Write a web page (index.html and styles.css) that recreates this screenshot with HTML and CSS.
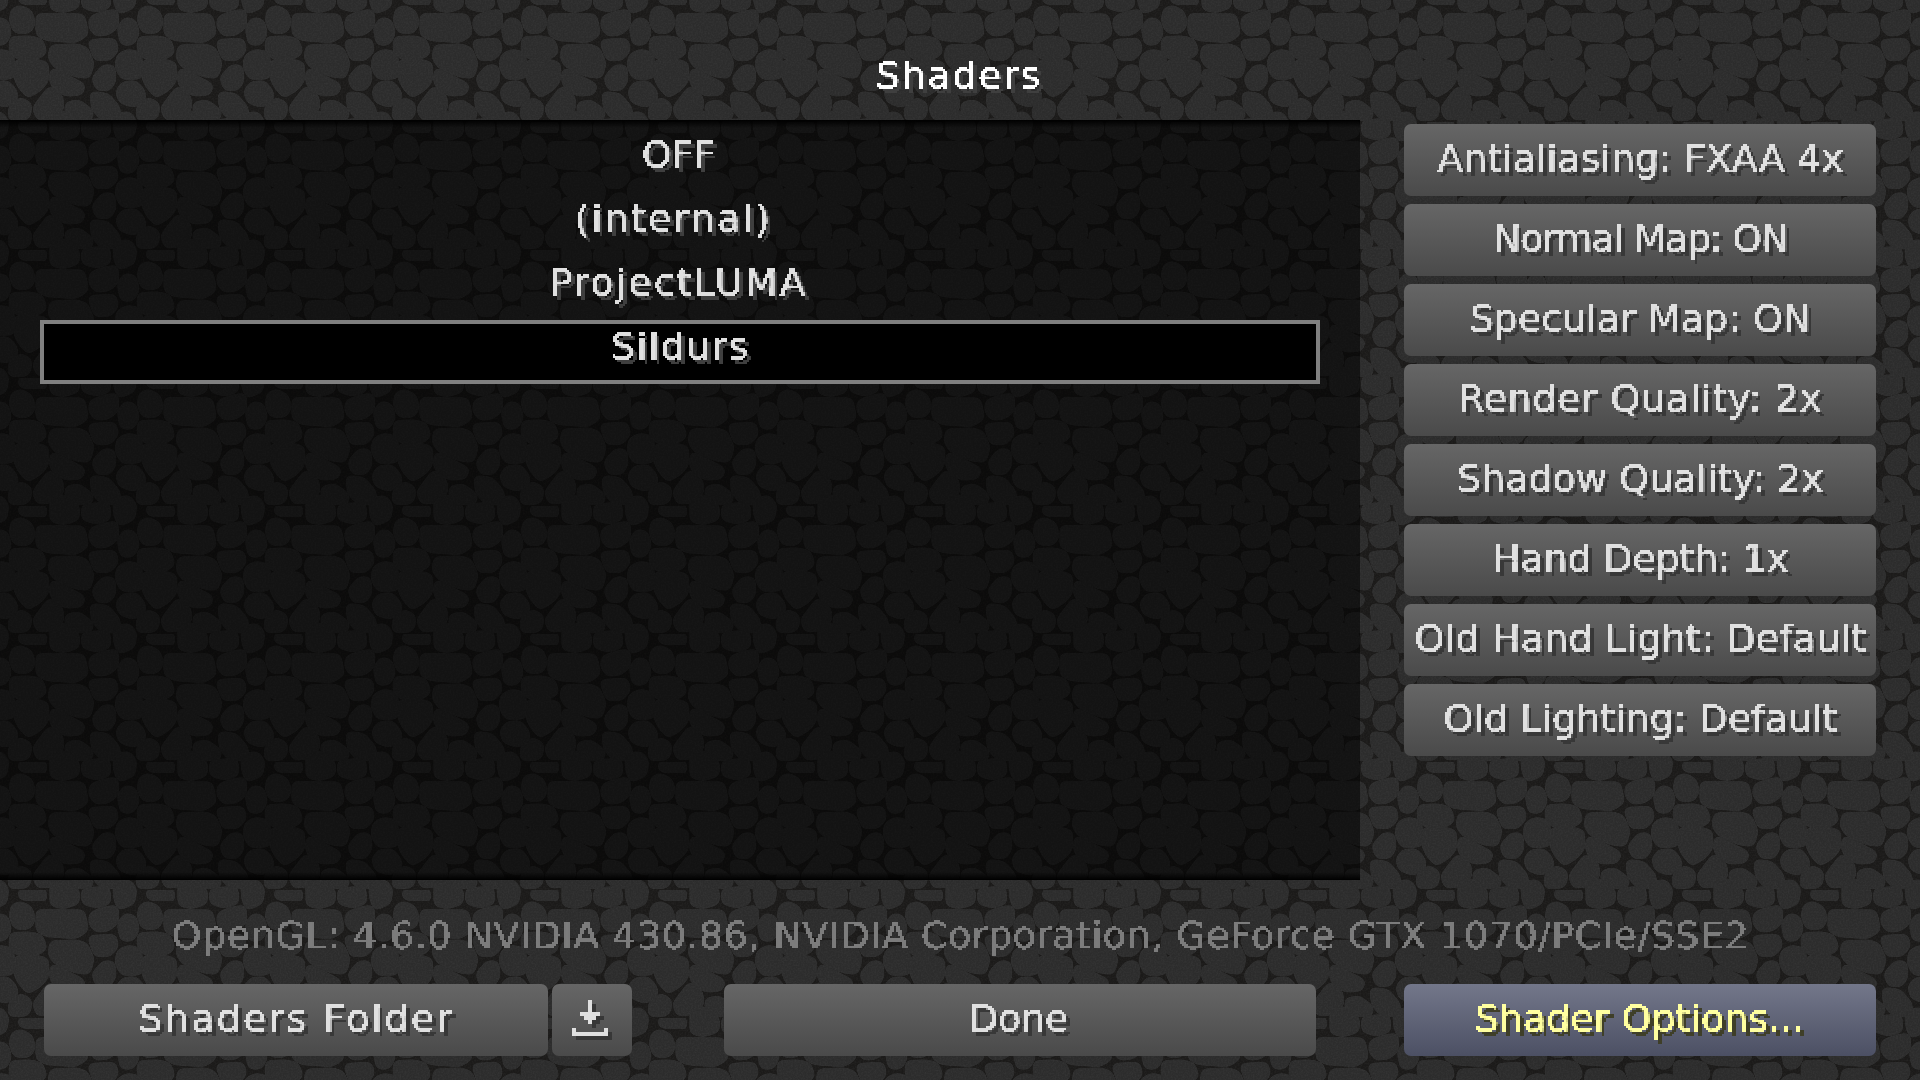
FILE: index.html
```html
<!DOCTYPE html>
<html lang="en">
<head>
<meta charset="utf-8">
<title>Shaders</title>
<link rel="stylesheet" href="styles.css">
</head>
<body>
<svg class="backdrop" width="1920" height="1080" aria-hidden="true">
  <defs>
    <filter id="crisp" color-interpolation-filters="sRGB" x="-5%" y="-20%" width="110%" height="140%">
      <feFlood x="0" y="0" width="1" height="1" flood-color="#000"/>
      <feComposite width="2" height="2"/>
      <feTile result="grid"/>
      <feComposite in="SourceGraphic" in2="grid" operator="in" result="dots"/>
      <feOffset in="dots" dx="1" dy="0" result="dx"/>
      <feOffset in="dots" dx="0" dy="1" result="dy"/>
      <feOffset in="dots" dx="1" dy="1" result="dd"/>
      <feMerge result="blocks">
        <feMergeNode in="dots"/><feMergeNode in="dx"/><feMergeNode in="dy"/><feMergeNode in="dd"/>
      </feMerge>
      <feComponentTransfer in="blocks"><feFuncA type="discrete" tableValues="0 1"/></feComponentTransfer>
    </filter>
    <filter id="goo" color-interpolation-filters="sRGB" x="-30%" y="-30%" width="160%" height="160%">
      <feGaussianBlur stdDeviation="9"/>
      <feComponentTransfer><feFuncA type="linear" slope="14" intercept="-6.5"/></feComponentTransfer>
      <feGaussianBlur stdDeviation="2.2"/>
    </filter>
    <filter id="grain" x="0" y="0" width="100%" height="100%">
      <feTurbulence type="fractalNoise" baseFrequency="0.6" numOctaves="2" seed="4"/>
      <feColorMatrix values="0 0 0 0 1  0 0 0 0 1  0 0 0 0 1  0.08 0 0 0 -0.03"/>
    </filter>
    <g id="peb" class="pebbles">
      <polygon points="42,34 62,26 88,40 96,70 84,90 50,90 38,64"/>
      <polygon points="118,50 190,52 245,52 255,100 225,118 140,112 118,100"/>
      <polygon points="278,56 310,44 345,38 345,78 320,96 290,98 276,80"/>
      <polygon points="362,85 378,62 400,68 408,100 395,125 370,125"/>
      <polygon points="38,120 90,118 120,125 130,155 110,168 60,170 38,155"/>
      <polygon points="158,145 230,142 255,150 272,190 262,225 225,220 170,195 155,175"/>
      <polygon points="275,128 340,125 345,150 325,172 290,172"/>
      <polygon points="360,170 385,158 415,165 420,225 400,228 370,228 355,200"/>
      <polygon points="52,188 110,188 136,195 136,240 118,262 85,282 62,255 50,225"/>
      <polygon points="160,215 245,258 240,275 200,278 170,265 158,240"/>
      <polygon points="286,235 312,205 335,205 338,240 325,262 296,262"/>
      <polygon points="358,275 372,255 405,252 425,275 428,295 400,312 365,300"/>
      <polygon points="108,325 150,270 178,290 182,320 165,345 118,350"/>
      <polygon points="35,325 62,303 85,315 82,345 70,352 35,352"/>
      <polygon points="205,315 235,310 270,335 268,352 225,352 205,335"/>
      <polygon points="280,285 320,290 350,325 352,352 310,352 285,325"/>
      <polygon points="65,372 130,372 130,392 100,391 65,385"/>
      <polygon points="160,350 195,342 228,370 228,400 190,412 160,405"/>
      <polygon points="255,370 320,365 322,400 290,410 255,400"/>
      <polygon points="350,350 385,345 400,365 395,400 360,415 350,385"/>
    </g>
    <g id="tile">
      <use href="#peb"/>
      <use href="#peb" x="-384"/>
      <use href="#peb" y="-384"/>
      <use href="#peb" x="-384" y="-384"/>
    </g>
    <pattern id="stone" width="384" height="384" patternUnits="userSpaceOnUse" patternTransform="scale(0.33333)">
      <rect width="384" height="384" fill="#1b1a19"/>
      <use href="#tile" fill="#2c2c2c" stroke="#2c2c2c" stroke-width="24" stroke-linejoin="round"/>
    </pattern>
  </defs>
  <rect width="1920" height="1080" fill="url(#stone)"/>
  <rect width="1920" height="1080" filter="url(#grain)"/>
</svg>

<main class="screen">
  <header class="title-bar"><h1 class="title txt sp-17">Shaders</h1></header>

  <div class="middle">
    <section class="list">
      <div class="row"><span class="row-text txt">OFF</span></div>
      <div class="row"><span class="row-text row-text-left txt sp-22">(internal)</span></div>
      <div class="row"><span class="row-text txt sp-20">ProjectLUMA</span></div>
      <div class="row row-selected"><span class="row-text txt sp-14">Sildurs</span></div>
    </section>
    <aside class="side">
      <button class="btn btn-side"><span class="txt">Antialiasing: FXAA 4x</span></button>
      <button class="btn btn-side"><span class="txt sp-n13">Normal Map: ON</span></button>
      <button class="btn btn-side"><span class="txt">Specular Map: ON</span></button>
      <button class="btn btn-side"><span class="txt sp-07">Render Quality: 2x</span></button>
      <button class="btn btn-side"><span class="txt">Shadow Quality: 2x</span></button>
      <button class="btn btn-side"><span class="txt sp-n02">Hand Depth: 1x</span></button>
      <button class="btn btn-side"><span class="txt sp-02">Old Hand Light: Default</span></button>
      <button class="btn btn-side"><span class="txt">Old Lighting: Default</span></button>
    </aside>
  </div>

  <footer class="footer">
    <p class="info txt sp-05">OpenGL: 4.6.0 NVIDIA 430.86, NVIDIA Corporation, GeForce GTX 1070/PCIe/SSE2</p>
    <div class="actions">
      <button class="btn btn-folder"><span class="txt sp-23">Shaders Folder</span></button>
      <button class="btn btn-icon" aria-label="Download">
        <svg class="icon" width="40" height="40" viewBox="0 0 40 40" shape-rendering="crispEdges">
          <g fill="#373737" transform="translate(4 4)">
            <path d="M16 0h4v12h8v4h-4v4h-4v4h-4v-4h-4v-4H8v-4h8zM0 28h4v4h28v-4h4v8H0z"/>
          </g>
          <path fill="#e0e0e0" d="M16 0h4v12h8v4h-4v4h-4v4h-4v-4h-4v-4H8v-4h8zM0 28h4v4h28v-4h4v8H0z"/>
        </svg>
      </button>
      <button class="btn btn-done"><span class="txt sp-n02">Done</span></button>
      <button class="btn btn-options"><span class="txt">Shader Options...</span></button>
    </div>
  </footer>
</main>
</body>
</html>
```
FILE: styles.css
```css
* { box-sizing: border-box; }
html, body { margin: 0; padding: 0; }
body {
  width: 1920px;
  height: 1080px;
  overflow: hidden;
  background: #1b1a19;
  font-family: "DejaVu Sans", "Liberation Sans", sans-serif;
  font-size: 38px;
  line-height: 48px;
  position: relative;
}
.backdrop { position: absolute; left: 0; top: 0; display: block; }
.pebbles polygon { filter: url(#goo); }
.screen {
  position: relative;
  width: 1920px;
  height: 1080px;
  display: flex;
  flex-direction: column;
}
.txt {
  color: #e0e0e0;
  text-shadow: 4px 4px 0 #383838;
  -webkit-text-stroke: 0.4px currentColor;
  filter: url(#crisp);
  display: inline-block;
}
.sp-n13 { letter-spacing: -1.3px; }
.sp-n02 { letter-spacing: -0.2px; }
.sp-02 { letter-spacing: 0.2px; }
.sp-05 { letter-spacing: 0.5px; }
.sp-07 { letter-spacing: 0.7px; }
.sp-14 { letter-spacing: 1.4px; }
.sp-17 { letter-spacing: 1.7px; }
.sp-20 { letter-spacing: 2px; }
.sp-22 { letter-spacing: 2.2px; }
.sp-23 { letter-spacing: 2.3px; }
.title-bar {
  height: 120px;
  display: flex;
  justify-content: center;
  padding: 51px 3px 0 0;
}
.title {
  margin: 0;
  font: inherit;
  color: #fff;
  text-shadow: 4px 4px 0 #3f3f3f;
}
.middle { display: flex; height: 760px; }
.list {
  width: 1360px;
  height: 760px;
  padding-top: 8px;
  background:
    linear-gradient(#000, rgba(0,0,0,0)) top / 100% 8px no-repeat,
    linear-gradient(rgba(0,0,0,0), #000) bottom / 100% 8px no-repeat,
    rgba(0,0,0,.56);
}
.row {
  height: 64px;
  margin: 0 40px;
  padding: 2px 4px 0 0;
  display: flex;
  justify-content: center;
}
.row-text { color: #e0e0e0; text-shadow: 4px 4px 0 #3f3f3f; }
.row-text-left { margin-right: 10px; }
.row-selected {
  background: #000;
  border: 4px solid #808080;
  padding: 0;
}
.row-selected .row-text { margin-top: -2px; }
.side {
  width: 560px;
  padding: 4px 0 0 44px;
  display: flex;
  flex-direction: column;
  gap: 8px;
}
.btn {
  height: 72px;
  padding: 0 0 4px;
  border: 0;
  border-radius: 7px;
  background: linear-gradient(#666666, #4a4a4a);
  font: inherit;
  display: flex;
  align-items: center;
  justify-content: center;
}
.btn-side { width: 472px; }
.footer {
  height: 200px;
  display: flex;
  flex-direction: column;
  align-items: stretch;
}
.info {
  margin: 0;
  height: 104px;
  padding-top: 31px;
  text-align: center;
  color: #7c7c7c;
  text-shadow: none;
  display: block;
}
.actions { display: flex; padding-left: 44px; }
.btn-folder { width: 504px; margin-right: 4px; }
.btn-icon { width: 80px; margin-right: 92px; padding: 0; }
.btn-done { width: 592px; margin-right: 88px; padding-right: 4px; }
.btn-options { width: 472px; background: linear-gradient(#73778a, #4c5064); padding-right: 2px; }
.btn-options .txt { color: #ffffa0; text-shadow: 4px 4px 0 #3f3f28; }
.icon { display: block; }
```
